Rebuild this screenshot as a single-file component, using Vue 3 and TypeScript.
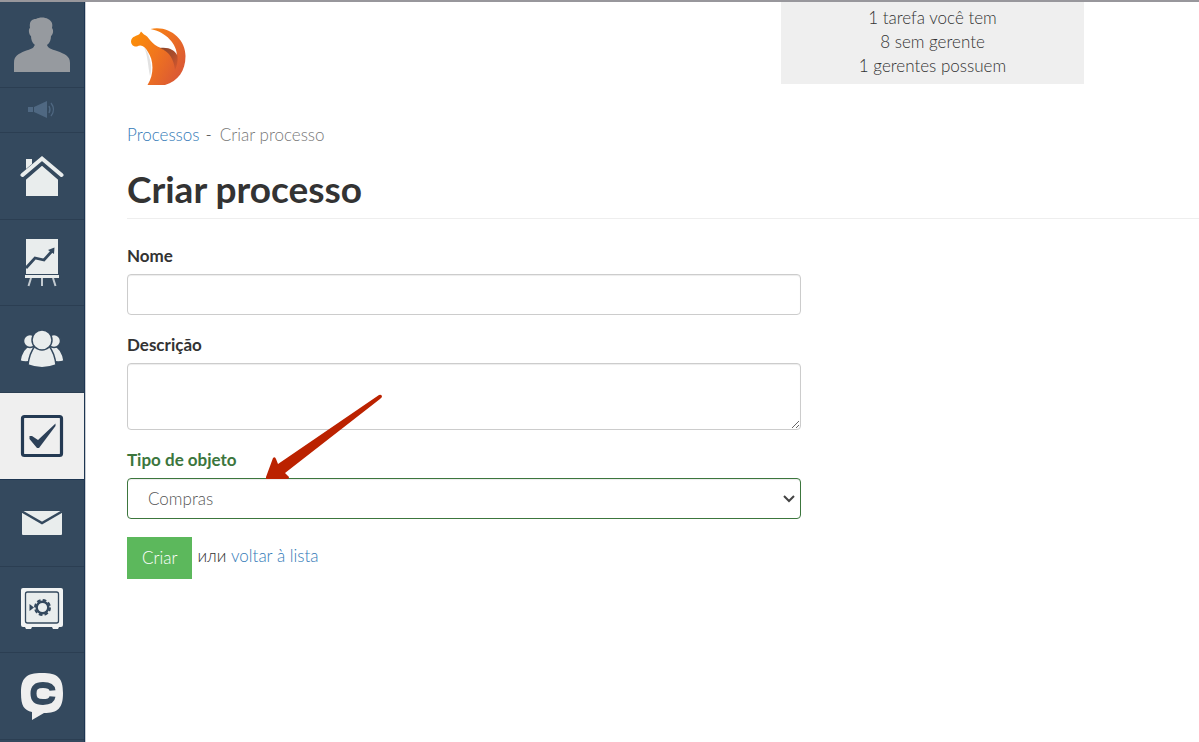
<script setup lang="ts">
import { ref } from 'vue'

interface NavItem {
  id: string
  label: string
}

const navItems: NavItem[] = [
  { id: 'home', label: 'Início' },
  { id: 'reports', label: 'Relatórios' },
  { id: 'clients', label: 'Clientes' },
  { id: 'tasks', label: 'Tarefas' },
  { id: 'mail', label: 'Mensagens' },
  { id: 'safe', label: 'Cofre' },
  { id: 'chat', label: 'Conversas' },
]
const activeItem = ref('tasks')

const summary: string[] = ['1 tarefa você tem', '8 sem gerente', '1 gerentes possuem']

const objectTypes: string[] = ['Compras']
const processName = ref('')
const description = ref('')
const objectType = ref('Compras')
</script>

<template>
  <div class="page">
    <nav class="sidebar">
      <a href="#" class="avatar" aria-label="Perfil">
        <svg width="58" height="56" viewBox="0 0 58 56">
          <path fill="#969a9f" d="M1 55V46C1 39 5 37 12 34C18 32 21 31 21 29L22 28C19 26 18 22 18 19C16 18 15 12 17 11C16 4 19 2 23 2C26 0 32 0 35 2C39 4 40 7 39 11C41 13 40 18 38 19C38 22 37 26 34 28C35 31 38 32 44 34C52 37 57 39 57 46V55Z" />
        </svg>
      </a>
      <a href="#" class="news" aria-label="Novidades">
        <svg width="30" height="20" viewBox="0 0 30 20">
          <path fill="#4f6882" d="M1 7H6V12H1ZM7 7L20 1V18L7 12Z" />
          <path fill="none" stroke="#4f6882" stroke-width="1.3" d="M22 6Q24 9.500 22 13M24 3Q29 9.500 24 16" />
        </svg>
      </a>
      <a
        v-for="item in navItems"
        :key="item.id"
        href="#"
        class="nav-item"
        :class="{ active: item.id === activeItem }"
        :aria-label="item.label"
        @click.prevent="activeItem = item.id"
      >
        <svg v-if="item.id === 'home'" width="44" height="48" viewBox="0 0 44 48">
          <path fill="#e9eded" d="M6 25L22 11L38 25V44H6Z" />
          <path fill="none" stroke="#34495e" stroke-width="8" d="M3 25L22 8.500L41 25" />
          <path fill="#e9eded" d="M6 7H12V12L6 17Z" />
          <path fill="none" stroke="#e9eded" stroke-width="4" stroke-linecap="round" d="M2.500 23L22 6.500L41.500 23" />
        </svg>
        <svg v-else-if="item.id === 'reports'" width="44" height="50" viewBox="0 0 44 50">
          <path fill="#e9eded" d="M6 1H38V37H6Z" />
          <path fill="#e9eded" d="M5 37H39V40H5Z" />
          <path stroke="#34495e" stroke-width="1" d="M6 36.500H38" />
          <path fill="none" stroke="#c2cad0" stroke-width="2" d="M11 40L8.500 48M22 40V48M33 40L35.500 48" />
          <path fill="none" stroke="#34495e" stroke-width="2.800" d="M6 30L15 20L24 22L32 13" />
          <path fill="#34495e" d="M34.500 9.500L34 16L28 12Z" />
        </svg>
        <svg v-else-if="item.id === 'clients'" width="44" height="40" viewBox="0 0 44 40">
          <g fill="#e9eded" stroke="#34495e" stroke-width="1.500">
            <path d="M11 15C5 18 1 24 0 32Q5 34 13 32L15 17Z" />
            <path d="M33 15C39 18 43 24 44 32Q39 34 31 32L29 17Z" />
            <circle cx="10" cy="12" r="6.500" />
            <circle cx="34" cy="12" r="6.500" />
            <path d="M15 17C11 22 9 27 8 36Q22 41.500 36 36C35 27 33 22 29 17Z" />
            <circle cx="22" cy="11" r="10" />
          </g>
        </svg>
        <svg v-else-if="item.id === 'tasks'" width="44" height="44" viewBox="0 0 44 44">
          <rect x="2.500" y="2.500" width="39" height="39" rx="2" fill="none" stroke="#243a53" stroke-width="3.200" />
          <path fill="#2c4058" d="M9.500 22L12 22L18 26L35.500 9.500V12L19 34H17L9.500 25Z" />
        </svg>
        <svg v-else-if="item.id === 'mail'" width="44" height="28" viewBox="0 0 44 28">
          <rect x="2" y="2" width="40" height="24" rx="1" fill="#e9eded" />
          <path fill="none" stroke="#34495e" stroke-width="2.500" d="M2 2.500L22 14L42 2.500" />
        </svg>
        <svg v-else-if="item.id === 'safe'" width="44" height="44" viewBox="0 0 44 44">
          <path fill="#f1f3f3" d="M3 1H41Q43 1 43 3V38Q43 40 41 40H39L38 42H33L32 40H12L11 42H6L5 40H3Q1 40 1 38V3Q1 1 3 1Z" />
          <rect x="5.500" y="5" width="33" height="31" rx="2" fill="#e9eded" stroke="#34495e" stroke-width="1.300" />
          <circle cx="22.500" cy="20.500" r="5.800" fill="none" stroke="#34495e" stroke-width="2.400" />
          <circle cx="22.500" cy="20.500" r="7.500" fill="none" stroke="#34495e" stroke-width="2" stroke-dasharray="3.700 2.190" />
          <path fill="#34495e" d="M9.500 17L14 20.500L9.500 24Z" />
        </svg>
        <svg v-else width="44" height="50" viewBox="0 0 44 50">
          <path fill="#efefef" d="M22 2C38 2 43 7 43 22C43 37 38 42 24 42L12 49V41C4 39 1 35 1 22C1 7 6 2 22 2Z" />
          <path fill="none" stroke="#34495e" stroke-width="6" d="M32.500 19.500C32 15.500 28 14 23 14C16 14 13.500 17 13.500 22.500C13.500 28 16 31 23 31C28 31 32 29.500 32.500 25.500" />
        </svg>
      </a>
    </nav>

    <div class="content">
      <header class="header">
        <a href="#" class="logo" aria-label="Página inicial">
          <svg width="60" height="60" viewBox="0 0 60 60">
            <defs>
              <linearGradient id="body" gradientUnits="userSpaceOnUse" x1="2" y1="14" x2="50" y2="40">
                <stop offset="0" stop-color="#fb8c0a" />
                <stop offset="0.500" stop-color="#f0741f" />
                <stop offset="1" stop-color="#dc5b33" />
              </linearGradient>
              <linearGradient id="shade" x1="0" y1="0" x2="1" y2="1">
                <stop offset="0" stop-color="#8d4529" />
                <stop offset="0.500" stop-color="#a84c2c" />
                <stop offset="1" stop-color="#d9582f" />
              </linearGradient>
            </defs>
            <path fill="#e2e2e2" d="M13 20C19 27 22 41 19 49C17 40 17 29 13 20Z" />
            <path fill="url(#body)" d="M10 4.500L13 7.500C18 9 20 18 30 21L46 29C46 17 35 5 19.500 2C38 -2 54.500 12 54.500 29C54.500 44 47 54 34 58H16.500C24 46 22 32 17 25C14 19 10 17 6 19.500C3 20 0 18 0 14C1 9 6 9 8.500 7Z" />
            <path fill="url(#shade)" d="M29 21C38 20 44 23 46.500 29C47 34 46 39 44 43C43 33 39 25 29 21Z" />
          </svg>
        </a>
        <div class="summary">
          <div v-for="line in summary" :key="line">{{ line }}</div>
        </div>
      </header>

      <main>
        <div class="breadcrumb">
          <a href="#">Processos</a><span class="dash">-</span><span class="current">Criar processo</span>
        </div>
        <h1>Criar processo</h1>

        <form class="form" @submit.prevent>
          <div class="field">
            <label for="name">Nome</label>
            <input id="name" v-model="processName" type="text" />
          </div>
          <div class="field">
            <label for="description">Descrição</label>
            <textarea id="description" v-model="description"></textarea>
          </div>
          <div class="field valid">
            <label for="type">Tipo de objeto</label>
            <div class="select-wrap">
              <select id="type" v-model="objectType">
                <option v-for="t in objectTypes" :key="t">{{ t }}</option>
              </select>
              <svg class="chevron" width="12" height="8" viewBox="0 0 12 8">
                <path fill="none" stroke="#444" stroke-width="2" d="M1 1L6 6L11 1" />
              </svg>
              <svg class="pointer" width="118" height="86" viewBox="0 0 118 86">
                <path fill="#bb2200" d="M113 2Q116 1 116 4L114 6L19 80L23 84Q23 86 20 86H0V84L7 65Q9 63 10 66L12 71Z" />
              </svg>
            </div>
          </div>
          <div class="actions">
            <button type="submit">Criar</button>
            <span>или <a href="#">voltar à lista</a></span>
          </div>
        </form>
      </main>
    </div>
  </div>
</template>

<style>
body {
  margin: 0;
  background: #fff;
}
</style>

<style scoped>
* {
  box-sizing: border-box;
}
.page {
  display: flex;
  min-height: 100vh;
  border-top: 2px solid #98979c;
  font-family: Lato, "Open Sans", sans-serif;
  font-size: 17px;
  font-weight: 300;
  line-height: 24px;
  color: #333;
}
a {
  color: #337ab7;
  text-decoration: none;
}
.sidebar {
  display: flex;
  flex: 0 0 86px;
  flex-direction: column;
  padding-bottom: 2px;
  background: #34495e;
  border-right: 1px solid #c9cdd3;
  box-shadow: inset -1px 0 #1d3551;
}
.sidebar a {
  display: flex;
  align-items: center;
  justify-content: center;
  margin-right: 1px;
  border-bottom: 1px solid #2b3e52;
}
.sidebar svg {
  display: block;
}
.sidebar .avatar {
  height: 86px;
}
.sidebar .news {
  height: 45px;
}
.sidebar .nav-item {
  flex: 1 0 86px;
}
.sidebar .active {
  background: #efefef;
  border-bottom-color: #1d3551;
}
.content {
  flex: 1;
  min-width: 0;
  padding-left: 41px;
}
.header {
  display: flex;
  align-items: flex-start;
  justify-content: space-between;
  padding-right: 115px;
}
.logo {
  padding: 25px 0 0 4px;
}
.logo svg {
  display: block;
}
.summary {
  width: 303px;
  padding: 4px 0 6px;
  background: #efefef;
  text-align: center;
}
.breadcrumb {
  margin-top: 36px;
}
.dash {
  margin: 0 8px 0 6px;
}
.current {
  color: #777;
}
h1 {
  margin: 22px 0 25px;
  padding-bottom: 9px;
  border-bottom: 1px solid #eee;
  font-size: 37px;
  font-weight: 700;
  line-height: 40px;
}
.form {
  max-width: 674px;
}
.field {
  margin-bottom: 18px;
}
label {
  display: block;
  margin-bottom: 6px;
  font-weight: 700;
}
input,
textarea,
select {
  display: block;
  width: 100%;
  height: 41px;
  padding: 8px 20px;
  border: 1px solid #ccc;
  border-radius: 4px;
  background: #fff;
  box-shadow: inset 0 1px 1px rgba(0, 0, 0, 0.075);
  font: inherit;
  color: #555;
}
textarea {
  height: 67px;
  resize: vertical;
}
select {
  appearance: none;
}
.valid label {
  color: #3c763d;
}
.valid select {
  border-color: #3c763d;
}
.select-wrap {
  position: relative;
}
.chevron {
  position: absolute;
  top: 17px;
  right: 6px;
}
.pointer {
  position: absolute;
  bottom: 40px;
  left: 139px;
  pointer-events: none;
}
.actions {
  display: flex;
  gap: 5px;
  align-items: flex-start;
}
.actions span {
  padding-top: 7px;
}
button {
  height: 42px;
  padding: 0 14px;
  border: 1px solid #5cb85c;
  background: #5cb85c;
  font: inherit;
  color: #fff;
}
</style>
